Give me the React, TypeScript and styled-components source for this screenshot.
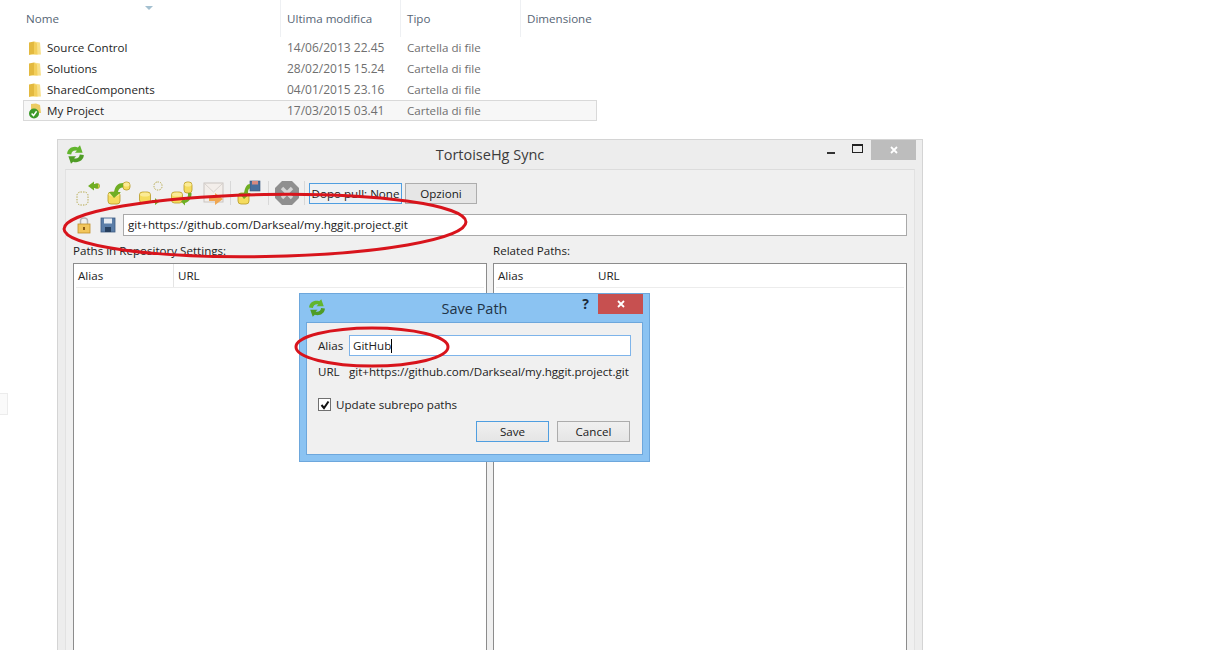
import React from 'react';
import styled, { createGlobalStyle } from 'styled-components';

const GlobalStyle = createGlobalStyle`
    html, body {
        margin: 0;
        padding: 0;
        background: #fff;
        overflow: hidden;
    }
    body {
        font-family: 'Open Sans', 'Noto Sans', sans-serif;
        font-size: 11.6px;
    }
`;

const Page = styled.div`
    position: relative;
    width: 1217px;
    height: 650px;
    overflow: hidden;
    background: #fff;
`;

/* explorer list */
const Explorer = styled.div`
    width: 574px;
    margin-left: 23px;
    position: relative;
`;

const SortArrow = styled.div`
    position: absolute;
    left: 122px;
    top: 6px;
    width: 0;
    height: 0;
    border-left: 4px solid transparent;
    border-right: 4px solid transparent;
    border-top: 4px solid #a4c0d0;
`;

const HeaderRow = styled.div`
    display: grid;
    grid-template-columns: 258px 120px 120px 1fr;
    height: 37px;
    align-items: center;
    color: #566575;
`;

const HeaderCell = styled.div`
    padding-left: ${p => (p.$first ? 3 : 6)}px;
    height: 37px;
    line-height: 37px;
    border-left: ${p => (p.$first ? 'none' : '1px solid #eef0f3')};
    margin-left: ${p => (p.$first ? 0 : -1)}px;
`;

const FileRow = styled.div`
    display: grid;
    grid-template-columns: 258px 120px 120px 1fr;
    height: 21px;
    align-items: center;
    background: ${p => (p.$selected ? '#f7f7f7' : 'transparent')};
    box-shadow: ${p => (p.$selected ? 'inset 0 0 0 1px #d9d9d9' : 'none')};
`;

const NameCell = styled.div`
    display: flex;
    align-items: center;
    gap: 5px;
    padding-left: 5px;
    color: #1e1e1e;
`;

const DimCell = styled.div`
    padding-left: 6px;
    color: #6f6f6f;
    font-size: ${p => (p.$date ? 12 : 11.6)}px;
`;

const SideSliver = styled.div`
    position: absolute;
    left: -1px;
    top: 393px;
    width: 7px;
    height: 20px;
    border: 1px solid #ececec;
    background: #fafafa;
`;

/* sync window */
const SyncWindow = styled.div`
    position: absolute;
    left: 57px;
    top: 139px;
    width: 864px;
    height: 540px;
    display: flex;
    flex-direction: column;
    background: #ededed;
    border: 1px solid #d4d4d4;
`;

const TitleBar = styled.div`
    position: relative;
    flex: 0 0 29px;
    display: flex;
    align-items: center;
    justify-content: center;
    color: #3c3c3c;
    font-size: 14.5px;
`;

const TitleIcon = styled.div`
    position: absolute;
    left: ${p => p.$left}px;
    top: ${p => p.$top}px;
    display: flex;
`;

const WindowControls = styled.div`
    position: absolute;
    right: 6px;
    top: 0;
    display: flex;
    align-items: flex-start;
`;

const GlyphButton = styled.div`
    width: 27px;
    height: 20px;
    display: flex;
    align-items: center;
    justify-content: center;
`;

const MinGlyph = styled.div`
    width: 8px;
    height: 2px;
    background: #333;
    margin-top: 6px;
`;

const MaxGlyph = styled.div`
    width: 9px;
    height: 6px;
    border: 1px solid #222;
    border-top-width: 2px;
    margin-top: -4px;
`;

const CloseButton = styled.div`
    width: 45px;
    height: 20px;
    display: flex;
    align-items: center;
    justify-content: center;
    background: ${p => (p.$active ? '#c75050' : '#bdbdbd')};
    color: #fff;
`;

const WindowBody = styled.div`
    flex: 1;
    margin: 0 7px;
    padding: 8px 7px 0 7px;
    display: flex;
    flex-direction: column;
    background: #f0f0f0;
    border-top: 1px solid #dcdcdc;
    border-left: 1px solid #e2e2e2;
    border-right: 1px solid #e2e2e2;
    min-height: 0;
`;

const Toolbar = styled.div`
    display: flex;
    align-items: center;
    height: 30px;
    padding-left: 2px;
`;

const ToolIcon = styled.svg`
    height: 28px;
    flex: none;
`;

const ToolSeparator = styled.div`
    width: 1px;
    height: 24px;
    background: #d8d8d8;
    margin: 0 ${p => p.$right}px 0 ${p => p.$left}px;
`;

const ToolButton = styled.div`
    height: 21px;
    width: ${p => p.$width}px;
    box-sizing: border-box;
    margin-right: 3px;
    display: flex;
    align-items: center;
    justify-content: center;
    white-space: nowrap;
    color: #1a1a1a;
    background: ${p => (p.$focused ? '#eef1f4' : '#e6e6e6')};
    border: 1px solid ${p => (p.$focused ? '#4f9ee0' : '#adadad')};
`;

const AddressRow = styled.div`
    display: flex;
    align-items: center;
    height: 22px;
    margin-top: 6px;
`;

const AddressIcon = styled.svg`
    width: 16px;
    height: 18px;
    margin-left: ${p => p.$left}px;
    flex: none;
`;

const AddressInput = styled.div`
    flex: 1;
    height: 20px;
    margin-left: 7px;
    padding-left: 4px;
    line-height: 20px;
    background: #fff;
    border: 1px solid #a9a9a9;
    color: #1a1a1a;
    white-space: nowrap;
`;

const Panes = styled.div`
    flex: 1;
    display: grid;
    grid-template-columns: 414px 414px;
    column-gap: 6px;
    min-height: 0;
    margin-top: 6px;
`;

const Pane = styled.div`
    display: flex;
    flex-direction: column;
    min-height: 0;
`;

const PaneLabel = styled.div`
    height: 21px;
    line-height: 18px;
    color: #222;
`;

const PathTable = styled.div`
    flex: 1;
    background: #fff;
    border: 1px solid #8c8c8c;
`;

const PathHead = styled.div`
    display: grid;
    grid-template-columns: ${p => p.$aliasWidth}px 1fr;
    height: 23px;
    line-height: 23px;
    margin: 0 2px;
    border-bottom: 1px solid #ececec;
    color: #222;
`;

const PathHeadCell = styled.div`
    padding-left: ${p => (p.$divided ? 4 : 2)}px;
    border-left: ${p => (p.$divided ? '1px solid #e4e4e4' : 'none')};
`;

/* save path dialog */
const SaveDialog = styled.div`
    position: absolute;
    left: 299px;
    top: 293px;
    width: 349px;
    height: 167px;
    display: flex;
    flex-direction: column;
    background: #8bc3f2;
    border: 1px solid #6da7dc;
`;

const DialogTitle = styled.div`
    position: relative;
    flex: 0 0 28px;
    display: flex;
    align-items: center;
    justify-content: center;
    color: #1f3347;
    font-size: 14.5px;
`;

const HelpGlyph = styled.div`
    position: absolute;
    right: 60px;
    top: 0;
    font-weight: 700;
    font-size: 14px;
    color: #1a2a3a;
`;

const DialogClose = styled(CloseButton)`
    position: absolute;
    right: 6px;
    top: 0;
`;

const DialogBody = styled.div`
    flex: 1;
    margin: 0 6px 6px;
    padding: 12px 11px 0 11px;
    background: #f0f0f0;
    border: 1px solid #6da7dc;
`;

const FormRow = styled.div`
    display: grid;
    grid-template-columns: 31px 1fr;
    align-items: center;
    height: ${p => p.$height}px;
    margin-bottom: ${p => p.$gap ?? 0}px;
    color: #222;
    white-space: nowrap;
`;

const AliasInput = styled.div`
    height: 19px;
    line-height: 19px;
    padding-left: 3px;
    background: #fff;
    border: 1px solid #7eb4ea;
`;

const Caret = styled.span`
    display: inline-block;
    width: 1px;
    height: 14px;
    vertical-align: -3px;
    background: #000;
`;

const CheckRow = styled.div`
    display: flex;
    align-items: center;
    gap: 5px;
    margin-top: 15px;
    color: #222;
`;

const CheckBox = styled.div`
    width: 11px;
    height: 11px;
    border: 1px solid #707070;
    background: #fff;
    display: flex;
    align-items: center;
    justify-content: center;
`;

const DialogActions = styled.div`
    display: flex;
    justify-content: flex-end;
    gap: 8px;
    margin-top: 9px;
    padding-right: 1px;
`;

const DialogButton = styled.div`
    width: 73px;
    height: 21px;
    box-sizing: border-box;
    display: flex;
    align-items: center;
    justify-content: center;
    color: #1a1a1a;
    background: linear-gradient(#f0f0f0, #e5e5e5);
    border: 1px solid ${p => (p.$primary ? '#4f9ee0' : '#acacac')};
`;

/* hand drawn red marks */
const Marks = styled.svg`
    position: absolute;
    left: 0;
    top: 0;
    pointer-events: none;
`;

const Cylinder = ({ x, y, w, h }: { x: number; y: number; w: number; h: number }) => (
    <g>
        <rect x={x} y={y} width={w} height={h} rx={3} fill="#f5dc5e" stroke="#b79a26" strokeWidth={0.8} />
        <ellipse cx={x + w / 2} cy={y + 2.5} rx={w / 2 - 0.5} ry={2} fill="#fbeb96" />
    </g>
);

const Dotted = ({ x, y, w, h }: { x: number; y: number; w: number; h: number }) => (
    <rect x={x} y={y} width={w} height={h} rx={3.5} fill="none" stroke="#b5a84a" strokeWidth={1} strokeDasharray="1.4 1.2" />
);

const CycleIcon = ({ size }: { size: number }) => (
    <svg width={size} height={size} viewBox="0 0 16 16">
        <path d="M1 7.5 C1 3 6 0.5 10 2 L11.8 0.2 L14 6.5 L7.5 6.5 L9.2 4.8 C7 4 4.6 5.2 4.4 8 Z" fill="#62b52e" />
        <path d="M15 8.5 C15 13 10 15.5 6 14 L4.2 15.8 L2 9.5 L8.5 9.5 L6.8 11.2 C9 12 11.4 10.8 11.6 8 Z" fill="#4f9c26" />
    </svg>
);

const FolderIcon = () => (
    <svg width={14} height={16} viewBox="0 0 14 16">
        <path d="M1 2.5 L6 1.5 L6 14 L1 15 Z" fill="#e3b93f" />
        <path d="M6 1.5 L12 2.5 L13 14.5 L1 15 L6 14 Z" fill="#f8e08a" />
        <path d="M6 1.5 L9 3.5 L9.5 14.5 L6 14 Z" fill="#f3cf5c" />
    </svg>
);

const ProjectIcon = () => (
    <svg width={14} height={16} viewBox="0 0 14 16">
        <path d="M3 1 L8 0.5 L12 2 L13 10 L3 10 Z" fill="#eccb62" />
        <circle cx={6} cy={10.5} r={5} fill="#3d9a2a" />
        <path d="M3.6 10.6 L5.5 12.6 L8.6 8.2" fill="none" stroke="#fff" strokeWidth={1.5} />
    </svg>
);

const CloseX = ({ size = 8 }: { size?: number }) => (
    <svg width={size} height={size} viewBox="0 0 8 8">
        <path d="M1 1 L7 7 M7 1 L1 7" stroke="#fff" strokeWidth={1.8} />
    </svg>
);

const arrowGreen = '#6fae24';

const FILES = [
    { name: 'Source Control', date: '14/06/2013 22.45' },
    { name: 'Solutions', date: '28/02/2015 15.24' },
    { name: 'SharedComponents', date: '04/01/2015 23.16' },
];

export default function App() {
    return (
        <Page>
            <GlobalStyle />
            <Explorer>
                <SortArrow />
                <HeaderRow>
                    <HeaderCell $first>Nome</HeaderCell>
                    <HeaderCell>Ultima modifica</HeaderCell>
                    <HeaderCell>Tipo</HeaderCell>
                    <HeaderCell>Dimensione</HeaderCell>
                </HeaderRow>
                {FILES.map(file => (
                    <FileRow key={file.name}>
                        <NameCell>
                            <FolderIcon />
                            {file.name}
                        </NameCell>
                        <DimCell $date>{file.date}</DimCell>
                        <DimCell>Cartella di file</DimCell>
                    </FileRow>
                ))}
                <FileRow $selected>
                    <NameCell>
                        <ProjectIcon />
                        My Project
                    </NameCell>
                    <DimCell $date>17/03/2015 03.41</DimCell>
                    <DimCell>Cartella di file</DimCell>
                </FileRow>
            </Explorer>
            <SideSliver />

            <SyncWindow>
                <TitleBar>
                    <TitleIcon $left={8} $top={5}>
                        <CycleIcon size={19} />
                    </TitleIcon>
                    TortoiseHg Sync
                    <WindowControls>
                        <GlyphButton>
                            <MinGlyph />
                        </GlyphButton>
                        <GlyphButton>
                            <MaxGlyph />
                        </GlyphButton>
                        <CloseButton>
                            <CloseX />
                        </CloseButton>
                    </WindowControls>
                </TitleBar>
                <WindowBody>
                    <Toolbar>
                        <ToolIcon width={32} viewBox="0 0 32 28">
                            <Dotted x={2} y={13} w={11} h={13} />
                            <circle cx={22} cy={7} r={2.6} fill="#d8d040" stroke="#7e9a20" strokeWidth={0.6} />
                            <path d="M13 7 L19 2.5 L19 5 L23 5 L23 9 L19 9 L19 11.5 Z" fill={arrowGreen} />
                        </ToolIcon>
                        <ToolIcon width={32} viewBox="0 0 32 28">
                            <Cylinder x={1} y={13} w={12} h={12} />
                            <Cylinder x={16} y={3} w={7} h={8} />
                            <path d="M7 13 C8 7 11 4 16 4 L16 8.5 C13 8.5 11.5 10 11 13 L14 13 L7 19 L2 13 Z" fill={arrowGreen} />
                        </ToolIcon>
                        <ToolIcon width={32} viewBox="0 0 32 28">
                            <Cylinder x={0.5} y={13} w={11} h={11} />
                            <Dotted x={15} y={3} w={8} h={8} />
                            <path d="M13 21 L16 21 L16 19 L20 23 L16 26 L16 24 L13 24 Z" fill={arrowGreen} />
                        </ToolIcon>
                        <ToolIcon width={32} viewBox="0 0 32 28">
                            <Cylinder x={0.5} y={13} w={11} h={11} />
                            <Cylinder x={13} y={3} w={8} h={11} />
                            <path d="M17 14 L20.5 14 C21 19 18 23 14 24 L14 26.5 L10 22.5 L14 19 L14 21 C16 20 17.5 17 17 14 Z" fill={arrowGreen} />
                        </ToolIcon>
                        <ToolIcon width={25} viewBox="0 0 25 28">
                            <rect x={1} y={4} width={19} height={19} fill="#f3eeea" stroke="#c9c4c0" strokeWidth={1} />
                            <path d="M2 5 L10.5 13 L19 5" fill="none" stroke="#d8d3cf" strokeWidth={1} />
                            <path d="M6 18 L12 18 L12 14 L20 20 L12 26 L12 22 L6 22 Z" fill="#f0a752" />
                        </ToolIcon>
                        <ToolSeparator $left={2} $right={6} />
                        <ToolIcon width={28} viewBox="0 0 28 28">
                            <Cylinder x={1} y={14} w={11} h={11} />
                            <rect x={13} y={2} width={10} height={10} fill="#4a6f9c" stroke="#35527a" strokeWidth={0.6} />
                            <rect x={15} y={2} width={6} height={3.5} fill="#d88a80" />
                            <path d="M7 14 C8 8 10 5 13 5 L13 9.5 C11.5 9.5 11 11 11 14 L14 14 L7 20 L2 14 Z" fill={arrowGreen} />
                        </ToolIcon>
                        <ToolSeparator $left={3} $right={3} />
                        <ToolIcon width={30} viewBox="0 0 30 28">
                            <path d="M10 2 L20 2 L27 9 L27 19 L20 26 L10 26 L3 19 L3 9 Z" fill="#8f8f8f" />
                            <path d="M10 9 L20 19 M20 9 L10 19" stroke="#d4d4d4" strokeWidth={3.4} />
                        </ToolIcon>
                        <ToolSeparator $left={2} $right={4} />
                        <ToolButton $focused $width={93}>
                            Dopo pull: None
                        </ToolButton>
                        <ToolButton $width={72}>Opzioni</ToolButton>
                    </Toolbar>
                    <AddressRow>
                        <AddressIcon viewBox="0 0 16 18" $left={3}>
                            <path d="M4.5 8 L4.5 5 C4.5 1 11.5 1 11.5 5 L11.5 8" fill="none" stroke="#b4b4b4" strokeWidth={1.5} />
                            <rect x={2} y={8} width={12} height={9} fill="#f2c65c" stroke="#c08f2a" strokeWidth={0.8} />
                            <rect x={7} y={11} width={2} height={3} fill="#8a5a14" />
                        </AddressIcon>
                        <AddressIcon viewBox="0 0 16 18" $left={8}>
                            <rect x={1} y={2} width={14} height={14} fill="#5b7ea8" stroke="#3c5a80" strokeWidth={0.8} />
                            <rect x={4} y={2.5} width={8} height={5} fill="#e6ecf2" />
                            <rect x={5} y={11} width={6} height={5} fill="#26405f" />
                        </AddressIcon>
                        <AddressInput>git+https://github.com/Darkseal/my.hggit.project.git</AddressInput>
                    </AddressRow>
                    <Panes>
                        <Pane>
                            <PaneLabel>Paths in Repository Settings:</PaneLabel>
                            <PathTable>
                                <PathHead $aliasWidth={97}>
                                    <PathHeadCell>Alias</PathHeadCell>
                                    <PathHeadCell $divided>URL</PathHeadCell>
                                </PathHead>
                            </PathTable>
                        </Pane>
                        <Pane>
                            <PaneLabel>Related Paths:</PaneLabel>
                            <PathTable>
                                <PathHead $aliasWidth={100}>
                                    <PathHeadCell>Alias</PathHeadCell>
                                    <PathHeadCell>URL</PathHeadCell>
                                </PathHead>
                            </PathTable>
                        </Pane>
                    </Panes>
                </WindowBody>
            </SyncWindow>

            <SaveDialog>
                <DialogTitle>
                    <TitleIcon $left={8} $top={5}>
                        <CycleIcon size={18} />
                    </TitleIcon>
                    Save Path
                    <HelpGlyph>?</HelpGlyph>
                    <DialogClose $active>
                        <CloseX />
                    </DialogClose>
                </DialogTitle>
                <DialogBody>
                    <FormRow $height={21} $gap={5}>
                        Alias
                        <AliasInput>
                            GitHub
                            <Caret />
                        </AliasInput>
                    </FormRow>
                    <FormRow $height={21}>
                        URL
                        <span>git+https://github.com/Darkseal/my.hggit.project.git</span>
                    </FormRow>
                    <CheckRow>
                        <CheckBox>
                            <svg width={10} height={10} viewBox="0 0 10 10">
                                <path d="M1.5 5 L4 8 L8.5 1.5" fill="none" stroke="#111" strokeWidth={2} />
                            </svg>
                        </CheckBox>
                        Update subrepo paths
                    </CheckRow>
                    <DialogActions>
                        <DialogButton $primary>Save</DialogButton>
                        <DialogButton>Cancel</DialogButton>
                    </DialogActions>
                </DialogBody>
            </SaveDialog>

            <Marks width={1217} height={650} viewBox="0 0 1217 650">
                <ellipse cx={265} cy={225.5} rx={201} ry={31} fill="none" stroke="#d8141c" strokeWidth={3} transform="rotate(-1 265 225.5)" />
                <ellipse cx={372} cy={347} rx={76} ry={19} fill="none" stroke="#d8141c" strokeWidth={3} />
            </Marks>
        </Page>
    );
}
